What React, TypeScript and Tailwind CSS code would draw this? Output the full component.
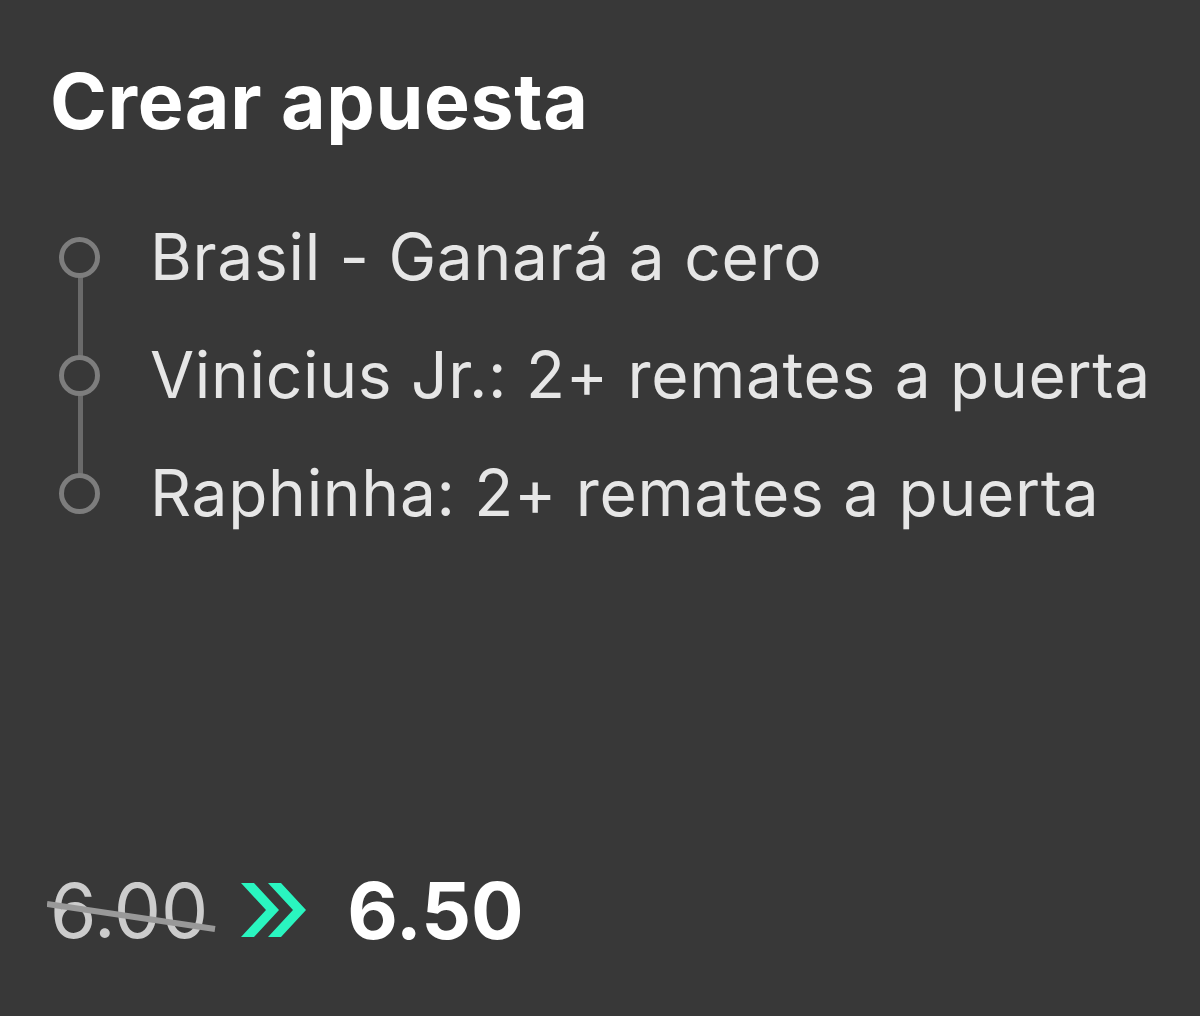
import React from "react";

const items = [
  "Brasil - Ganará a cero",
  "Vinicius Jr.: 2+ remates a puerta",
  "Raphinha: 2+ remates a puerta",
];

export default function App() {
  return (
    <div
      className="w-[1200px] h-[1016px] bg-[#383838] flex flex-col pl-[50px] pr-[20px] pt-[56px] pb-[60px] overflow-hidden"
      style={{ fontFamily: "Inter, 'Noto Sans', sans-serif" }}
    >
      <h1 className="text-[77px] leading-[90px] font-bold text-white tracking-[0.6px] whitespace-nowrap">Crear apuesta</h1>
      <div className="relative mt-[72px] flex flex-col gap-[40px]">
        <div className="absolute left-[28px] top-[40px] w-[5px] h-[236px] bg-[#6a6a6a]" />
        {items.map((t) => (
          <div key={t} className="flex items-center h-[78px]">
            <div className="relative z-10 shrink-0 w-[41px] h-[41px] rounded-full border-[5px] border-[#7d7d7d] bg-[#383838] ml-[9px]" />
            <span className="ml-[50px] text-[64px] leading-[78px] text-[#e6e6e6] tracking-[0.7px] whitespace-nowrap">{t}</span>
          </div>
        ))}
      </div>
      <div className="mt-auto flex items-center">
        <div className="relative">
          <span className="text-[75px] leading-[90px] text-[#cccccc]">6.00</span>
          <svg className="absolute left-[-3px] top-[30px]" width="172" height="40" viewBox="0 0 172 40">
            <line x1="0" y1="8" x2="168" y2="33" stroke="#999999" strokeWidth="6" />
          </svg>
        </div>
        <svg className="ml-[33px]" width="66" height="56" viewBox="0 0 66 56">
          <polygon points="0,0 13,0 38,27 13,54 0,54 25,27" fill="#2af5c0" />
          <polygon points="27,0 40,0 65,27 40,54 27,54 52,27" fill="#2af5c0" />
        </svg>
        <span className="ml-[40px] text-[78px] leading-[90px] font-bold text-white">6.50</span>
      </div>
    </div>
  );
}
